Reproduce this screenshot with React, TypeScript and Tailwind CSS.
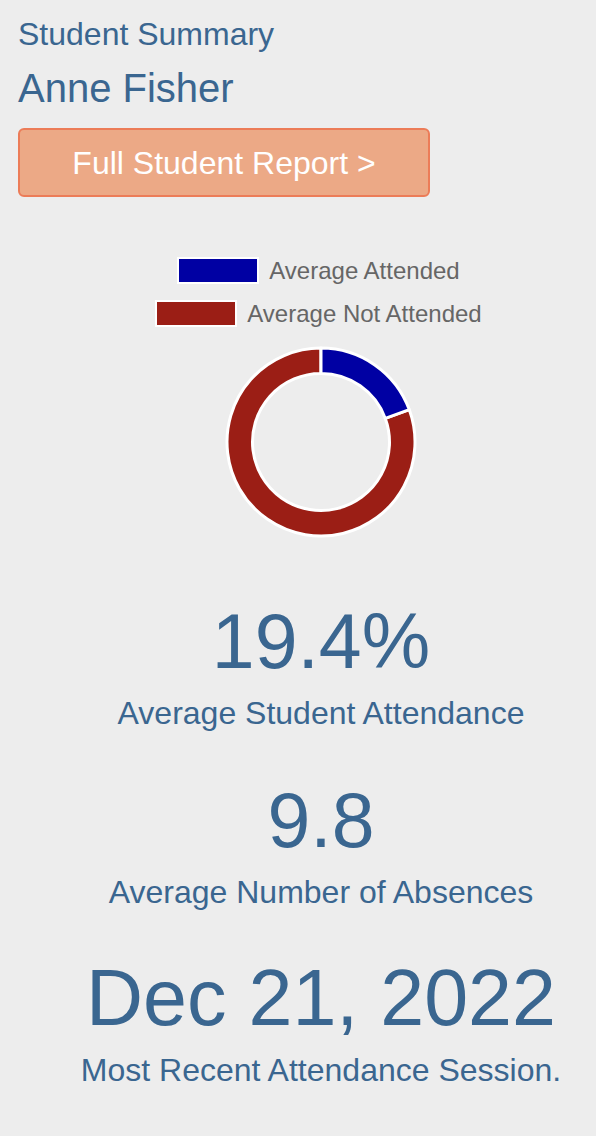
import React from "react";

const attended = 19.4;

function polar(r: number, deg: number) {
  const a = (deg * Math.PI) / 180;
  return { x: 100 + r * Math.sin(a), y: 100 - r * Math.cos(a) };
}

function Donut() {
  const R = 94;
  const r = 68.5;
  const end = (attended / 100) * 360;
  const o0 = polar(R, 0);
  const o1 = polar(R, end);
  const i0 = polar(r, 0);
  const i1 = polar(r, end);
  const blue = `M ${o0.x} ${o0.y} A ${R} ${R} 0 0 1 ${o1.x} ${o1.y} L ${i1.x} ${i1.y} A ${r} ${r} 0 0 0 ${i0.x} ${i0.y} Z`;
  const red = `M ${o1.x} ${o1.y} A ${R} ${R} 0 1 1 ${o0.x} ${o0.y} L ${i0.x} ${i0.y} A ${r} ${r} 0 1 0 ${i1.x} ${i1.y} Z`;
  return (
    <svg width="200" height="200" viewBox="0 0 200 200">
      <path d={red} fill="#9b1e15" stroke="#ffffff" strokeWidth="3" strokeLinejoin="round" />
      <path d={blue} fill="#0000a3" stroke="#ffffff" strokeWidth="3" strokeLinejoin="round" />
    </svg>
  );
}

function LegendItem({ color, label }: { color: string; label: string }) {
  return (
    <div className="flex items-center gap-[10px] h-[27px]">
      <span className={`w-[82px] h-[27px] border-2 border-white ${color}`} />
      <span className="text-[24px] leading-none text-[#666666]">{label}</span>
    </div>
  );
}

function Stat({ value, label, size, first }: { value: string; label: string; size: string; first: string }) {
  return (
    <div className={`flex flex-col items-center ${first}`}>
      <div className={`${size} leading-none whitespace-nowrap`}>{value}</div>
      <div className="mt-[17px] text-[32px] leading-none whitespace-nowrap">{label}</div>
    </div>
  );
}

export default function App() {
  return (
    <div
      className="min-h-screen w-full bg-[#ededed] text-[#3a6690] overflow-hidden"
      style={{ fontFamily: '"Liberation Sans", Arial, sans-serif' }}
    >
      <div className="pl-[18px] pt-[18px]">
        <div className="text-[32px] leading-none">Student Summary</div>
        <div className="mt-[18px] text-[40px] leading-none">Anne Fisher</div>
        <button className="mt-[20px] w-[412px] h-[69px] rounded-[6px] border-2 border-[#ec7c58] bg-[#eca986] flex items-center justify-center text-white text-[32px] leading-none">
          Full Student Report &gt;
        </button>
      </div>

      <div className="pl-[46px] flex flex-col items-center pb-10">
        <div className="mt-[60px] flex flex-col items-center gap-[16px] pr-[5px]">
          <LegendItem color="bg-[#0000a3]" label="Average Attended" />
          <LegendItem color="bg-[#9b1e15]" label="Average Not Attended" />
        </div>
        <div className="mt-[15px]">
          <Donut />
        </div>
        <Stat first="mt-[61px]" size="text-[77px]" value="19.4%" label="Average Student Attendance" />
        <Stat first="mt-[53px]" size="text-[77px]" value="9.8" label="Average Number of Absences" />
        <Stat first="mt-[50px]" size="text-[79px]" value="Dec 21, 2022" label="Most Recent Attendance Session." />
      </div>
    </div>
  );
}
